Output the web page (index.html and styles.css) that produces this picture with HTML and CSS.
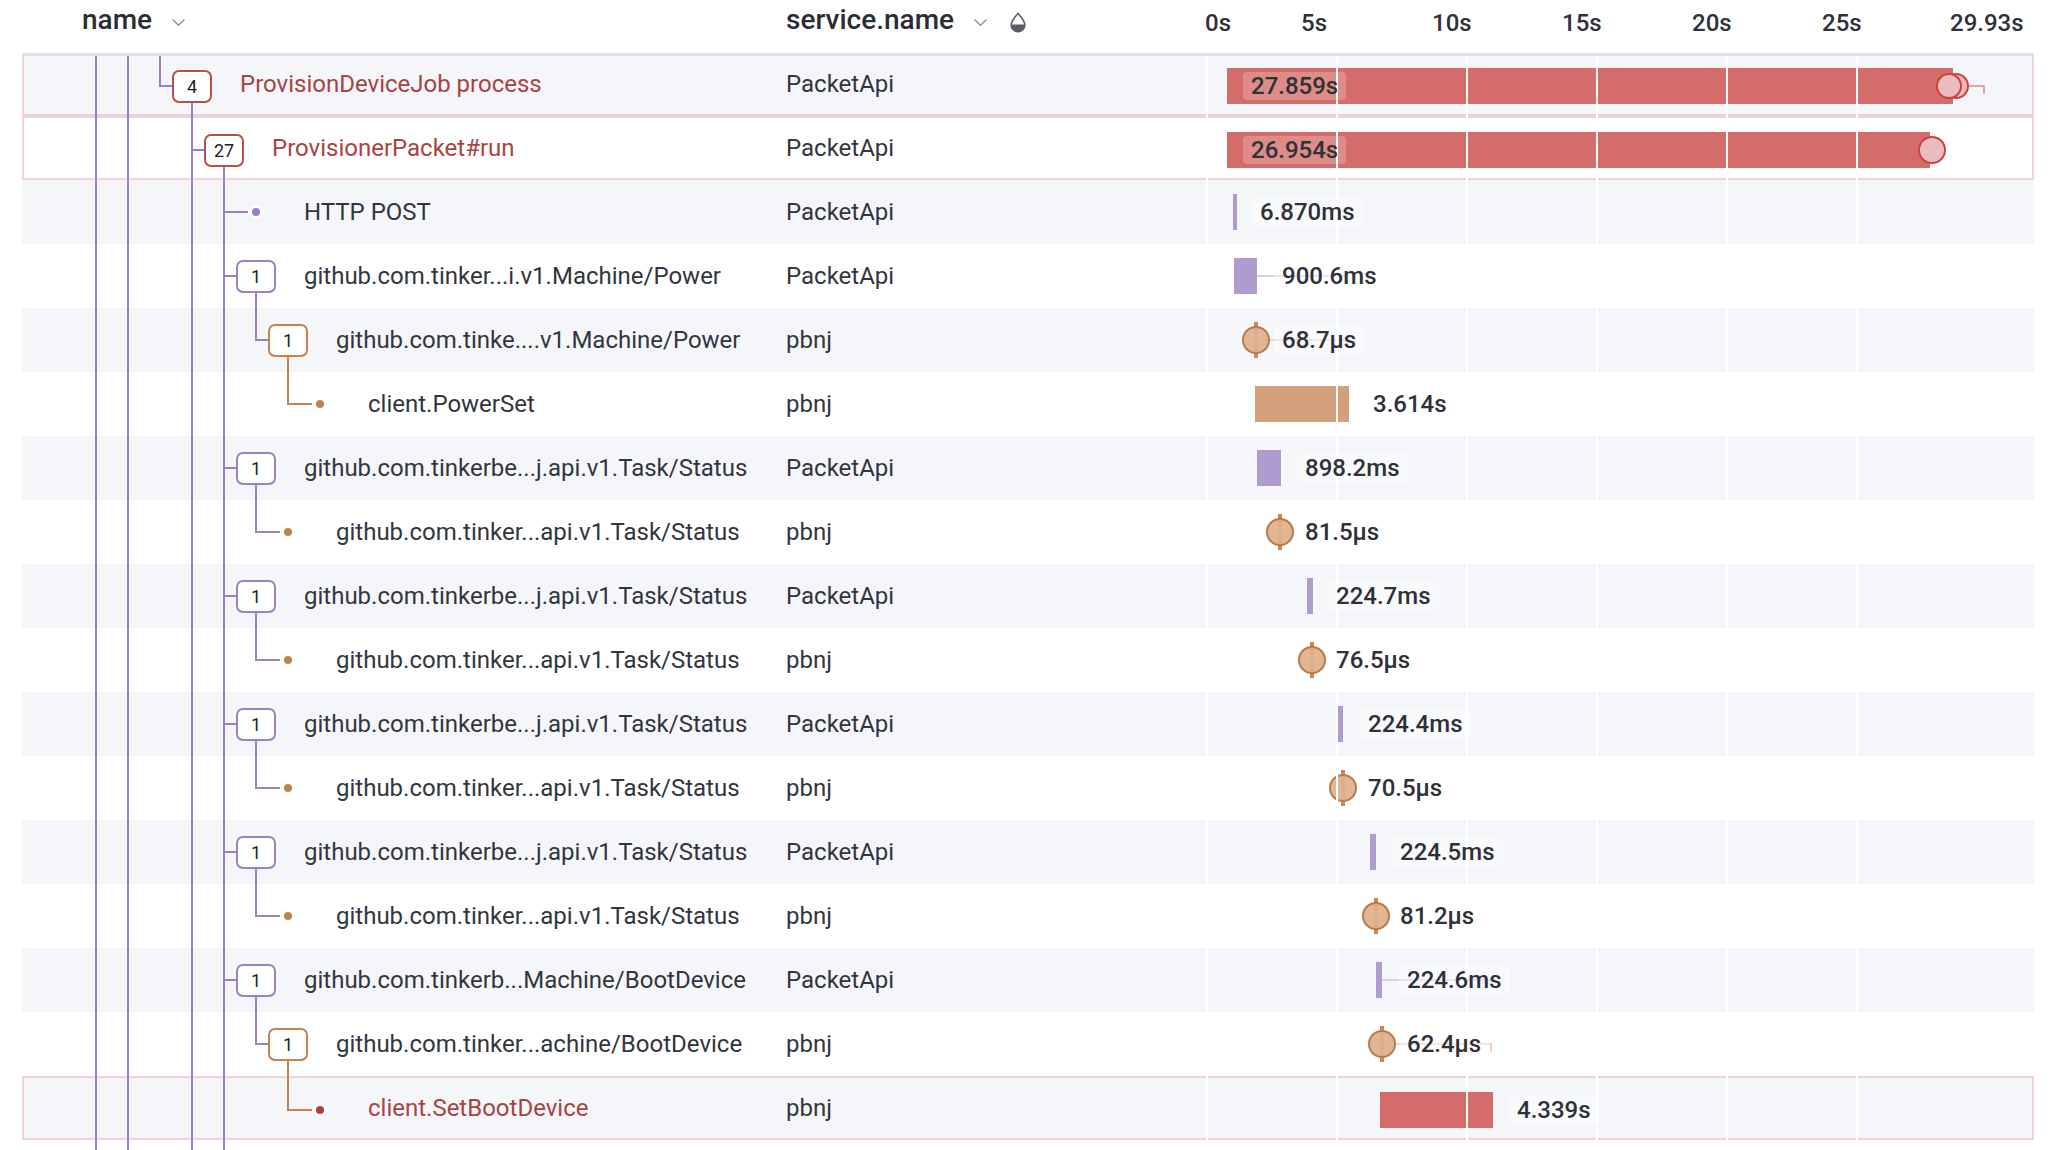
FILE: index.html
```html
<!DOCTYPE html>
<html lang="en">
<head>
<meta charset="utf-8">
<title>Trace</title>
<link rel="stylesheet" href="styles.css">
</head>
<body>
<div class="trace">
  <div class="head">
    <div class="hc hname"><span class="ht">name</span><svg class="chev" width="13" height="7" viewBox="0 0 13 7"><polyline points="0.5,0.5 6.5,6.3 12.5,0.5"/></svg></div>
    <div class="hc hsvc"><span class="ht">service.name</span><svg class="chev" width="13" height="7" viewBox="0 0 13 7"><polyline points="0.5,0.5 6.5,6.3 12.5,0.5"/></svg><svg class="drop" width="18" height="21" viewBox="0 0 18 21"><path class="dfill" d="M2.2 12.5 H15.8 A6.8 6.8 0 0 1 2.2 12.5 Z"/><path class="dline" d="M9 1.5 C9 1.5 2.2 8.6 2.2 13 A6.8 6.8 0 0 0 15.8 13 C15.8 8.6 9 1.5 9 1.5 Z"/></svg></div>
    <div class="axis">
      <span class="at" style="left:-1px">0s</span>
      <span class="at" style="left:95px">5s</span>
      <span class="at" style="left:226px">10s</span>
      <span class="at" style="left:356px">15s</span>
      <span class="at" style="left:486px">20s</span>
      <span class="at" style="left:616px">25s</span>
      <span class="at" style="left:744px">29.93s</span>
    </div>
  </div>

  <!-- 1 -->
  <div class="row odd err">
    <svg class="g" width="330" height="64" viewBox="0 0 330 64"><path class="p" d="M74 0V64M106 0V64M138 0V34H150M170 50V64"/></svg>
    <div class="cname"><span class="node d0 badge bred">4</span><span class="nm red">ProvisionDeviceJob process</span></div>
    <div class="csvc">PacketApi</div>
    <div class="ctl">
      <div class="bar red" style="left:21px;width:726px"></div>
      <div class="brk lred" style="left:760px;width:19px"></div>
      <div class="evt" style="left:750px"></div>
      <div class="evt" style="left:743px"></div>
      <span class="lbl onbar" style="left:37px">27.859s</span>
    </div>
  </div>
  <!-- 2 -->
  <div class="row err">
    <svg class="g" width="330" height="64" viewBox="0 0 330 64"><path class="p" d="M74 0V64M106 0V64M170 0V64M170 34H182M202 50V64"/></svg>
    <div class="cname"><span class="node d1 badge bred">27</span><span class="nm red">ProvisionerPacket#run</span></div>
    <div class="csvc">PacketApi</div>
    <div class="ctl">
      <div class="bar red" style="left:21px;width:703px"></div>
      <div class="evt big" style="left:726px"></div>
      <span class="lbl onbar" style="left:37px">26.954s</span>
    </div>
  </div>
  <!-- 3 -->
  <div class="row odd">
    <svg class="g" width="330" height="64" viewBox="0 0 330 64"><path class="p" d="M74 0V64M106 0V64M170 0V64M202 0V64M202 32H226"/></svg>
    <div class="cname"><span class="node d2 leaf"><i class="dot dp"></i></span><span class="nm">HTTP POST</span></div>
    <div class="csvc">PacketApi</div>
    <div class="ctl">
      <div class="bar purple" style="left:27px;width:4px"></div>
      <span class="lbl" style="left:46px">6.870ms</span>
    </div>
  </div>
  <!-- 4 -->
  <div class="row">
    <svg class="g" width="330" height="64" viewBox="0 0 330 64"><path class="p" d="M74 0V64M106 0V64M170 0V64M202 0V64M202 32H214M234 48V64"/></svg>
    <div class="cname"><span class="node d2 badge bp">1</span><span class="nm">github.com.tinker...i.v1.Machine/Power</span></div>
    <div class="csvc">PacketApi</div>
    <div class="ctl">
      <div class="bar purple" style="left:28px;width:23px"></div>
      <div class="brk lpurple" style="left:51px;width:91px"></div>
      <span class="lbl" style="left:68px">900.6ms</span>
    </div>
  </div>
  <!-- 5 -->
  <div class="row odd">
    <svg class="g" width="330" height="64" viewBox="0 0 330 64"><path class="p" d="M74 0V64M106 0V64M170 0V64M202 0V64M234 0V32H246"/><path class="o" d="M266 48V64"/></svg>
    <div class="cname"><span class="node d3 badge bo">1</span><span class="nm">github.com.tinke....v1.Machine/Power</span></div>
    <div class="csvc">pbnj</div>
    <div class="ctl">
      <div class="brk lorange" style="left:50px;width:92px"></div>
      <div class="tk" style="left:48px"></div>
      <div class="mark" style="left:50px"></div>
      <span class="lbl" style="left:68px">68.7µs</span>
    </div>
  </div>
  <!-- 6 -->
  <div class="row">
    <svg class="g" width="330" height="64" viewBox="0 0 330 64"><path class="p" d="M74 0V64M106 0V64M170 0V64M202 0V64"/><path class="o" d="M266 0V32H290"/></svg>
    <div class="cname"><span class="node d4 leaf"><i class="dot do"></i></span><span class="nm">client.PowerSet</span></div>
    <div class="csvc">pbnj</div>
    <div class="ctl">
      <div class="bar orange" style="left:49px;width:94px"></div>
      <span class="lbl" style="left:159px">3.614s</span>
    </div>
  </div>
  <!-- 7 -->
  <div class="row odd">
    <svg class="g" width="330" height="64" viewBox="0 0 330 64"><path class="p" d="M74 0V64M106 0V64M170 0V64M202 0V64M202 32H214M234 48V64"/></svg>
    <div class="cname"><span class="node d2 badge bp">1</span><span class="nm">github.com.tinkerbe...j.api.v1.Task/Status</span></div>
    <div class="csvc">PacketApi</div>
    <div class="ctl">
      <div class="bar purple" style="left:51px;width:24px"></div>
      <span class="lbl" style="left:91px">898.2ms</span>
    </div>
  </div>
  <!-- 8 -->
  <div class="row">
    <svg class="g" width="330" height="64" viewBox="0 0 330 64"><path class="p" d="M74 0V64M106 0V64M170 0V64M202 0V64M234 0V32H258"/></svg>
    <div class="cname"><span class="node d3 leaf"><i class="dot do"></i></span><span class="nm">github.com.tinker...api.v1.Task/Status</span></div>
    <div class="csvc">pbnj</div>
    <div class="ctl">
      <div class="tk" style="left:72px"></div>
      <div class="mark" style="left:74px"></div>
      <span class="lbl" style="left:91px">81.5µs</span>
    </div>
  </div>
  <!-- 9 -->
  <div class="row odd">
    <svg class="g" width="330" height="64" viewBox="0 0 330 64"><path class="p" d="M74 0V64M106 0V64M170 0V64M202 0V64M202 32H214M234 48V64"/></svg>
    <div class="cname"><span class="node d2 badge bp">1</span><span class="nm">github.com.tinkerbe...j.api.v1.Task/Status</span></div>
    <div class="csvc">PacketApi</div>
    <div class="ctl">
      <div class="bar purple" style="left:101px;width:6px"></div>
      <span class="lbl" style="left:122px">224.7ms</span>
    </div>
  </div>
  <!-- 10 -->
  <div class="row">
    <svg class="g" width="330" height="64" viewBox="0 0 330 64"><path class="p" d="M74 0V64M106 0V64M170 0V64M202 0V64M234 0V32H258"/></svg>
    <div class="cname"><span class="node d3 leaf"><i class="dot do"></i></span><span class="nm">github.com.tinker...api.v1.Task/Status</span></div>
    <div class="csvc">pbnj</div>
    <div class="ctl">
      <div class="tk" style="left:104px"></div>
      <div class="mark" style="left:106px"></div>
      <span class="lbl" style="left:122px">76.5µs</span>
    </div>
  </div>
  <!-- 11 -->
  <div class="row odd">
    <svg class="g" width="330" height="64" viewBox="0 0 330 64"><path class="p" d="M74 0V64M106 0V64M170 0V64M202 0V64M202 32H214M234 48V64"/></svg>
    <div class="cname"><span class="node d2 badge bp">1</span><span class="nm">github.com.tinkerbe...j.api.v1.Task/Status</span></div>
    <div class="csvc">PacketApi</div>
    <div class="ctl">
      <div class="bar purple" style="left:131px;width:6px"></div>
      <span class="lbl" style="left:154px">224.4ms</span>
    </div>
  </div>
  <!-- 12 -->
  <div class="row">
    <svg class="g" width="330" height="64" viewBox="0 0 330 64"><path class="p" d="M74 0V64M106 0V64M170 0V64M202 0V64M234 0V32H258"/></svg>
    <div class="cname"><span class="node d3 leaf"><i class="dot do"></i></span><span class="nm">github.com.tinker...api.v1.Task/Status</span></div>
    <div class="csvc">pbnj</div>
    <div class="ctl">
      <div class="tk" style="left:135px"></div>
      <div class="mark" style="left:137px"></div>
      <span class="lbl" style="left:154px">70.5µs</span>
    </div>
  </div>
  <!-- 13 -->
  <div class="row odd">
    <svg class="g" width="330" height="64" viewBox="0 0 330 64"><path class="p" d="M74 0V64M106 0V64M170 0V64M202 0V64M202 32H214M234 48V64"/></svg>
    <div class="cname"><span class="node d2 badge bp">1</span><span class="nm">github.com.tinkerbe...j.api.v1.Task/Status</span></div>
    <div class="csvc">PacketApi</div>
    <div class="ctl">
      <div class="bar purple" style="left:164px;width:6px"></div>
      <span class="lbl" style="left:186px">224.5ms</span>
    </div>
  </div>
  <!-- 14 -->
  <div class="row">
    <svg class="g" width="330" height="64" viewBox="0 0 330 64"><path class="p" d="M74 0V64M106 0V64M170 0V64M202 0V64M234 0V32H258"/></svg>
    <div class="cname"><span class="node d3 leaf"><i class="dot do"></i></span><span class="nm">github.com.tinker...api.v1.Task/Status</span></div>
    <div class="csvc">pbnj</div>
    <div class="ctl">
      <div class="tk" style="left:168px"></div>
      <div class="mark" style="left:170px"></div>
      <span class="lbl" style="left:186px">81.2µs</span>
    </div>
  </div>
  <!-- 15 -->
  <div class="row odd">
    <svg class="g" width="330" height="64" viewBox="0 0 330 64"><path class="p" d="M74 0V64M106 0V64M170 0V64M202 0V64M202 32H214M234 48V64"/></svg>
    <div class="cname"><span class="node d2 badge bp">1</span><span class="nm">github.com.tinkerb...Machine/BootDevice</span></div>
    <div class="csvc">PacketApi</div>
    <div class="ctl">
      <div class="bar purple" style="left:170px;width:6px"></div>
      <div class="brk lpurple" style="left:176px;width:110px"></div>
      <span class="lbl" style="left:193px">224.6ms</span>
    </div>
  </div>
  <!-- 16 -->
  <div class="row">
    <svg class="g" width="330" height="64" viewBox="0 0 330 64"><path class="p" d="M74 0V64M106 0V64M170 0V64M202 0V64M234 0V32H246"/><path class="o" d="M266 48V64"/></svg>
    <div class="cname"><span class="node d3 badge bo">1</span><span class="nm">github.com.tinker...achine/BootDevice</span></div>
    <div class="csvc">pbnj</div>
    <div class="ctl">
      <div class="brk lorange" style="left:176px;width:110px"></div>
      <div class="tk" style="left:174px"></div>
      <div class="mark" style="left:176px"></div>
      <span class="lbl" style="left:193px">62.4µs</span>
    </div>
  </div>
  <!-- 17 -->
  <div class="row odd err">
    <svg class="g" width="330" height="64" viewBox="0 0 330 64"><path class="p" d="M74 0V64M106 0V64M170 0V64M202 0V64"/><path class="o" d="M266 0V34H290"/></svg>
    <div class="cname"><span class="node d4 leaf"><i class="dot dr"></i></span><span class="nm red">client.SetBootDevice</span></div>
    <div class="csvc">pbnj</div>
    <div class="ctl">
      <div class="bar red" style="left:174px;width:113px"></div>
      <span class="lbl" style="left:303px">4.339s</span>
    </div>
  </div>
  <!-- 18 (partially visible) -->
  <div class="row">
    <svg class="g" width="330" height="64" viewBox="0 0 330 64"><path class="p" d="M74 0V64M106 0V64M170 0V64M202 0V64"/></svg>
    <div class="cname"></div>
    <div class="csvc"></div>
    <div class="ctl"></div>
  </div>
</div>
</body>
</html>
```

FILE: styles.css
```css
html, body {
  margin: 0;
  padding: 0;
  background: #ffffff;
  overflow: hidden;
  height: 1150px;
}

body {
  font-family: Roboto, "Liberation Sans", sans-serif;
  color: #33353e;
}

.trace {
  width: 2012px;
  margin-left: 22px;
}

/* header */
.head {
  display: grid;
  grid-template-columns: 764px 420px 1fr;
  height: 53px;
  border-bottom: 3px solid #dde0ea;
  background: #ffffff;
  position: relative;
  z-index: 5;
  margin-bottom: -4px;
}

.hc {
  display: flex;
  align-items: flex-start;
  padding-top: 4px;
}

.hname {
  padding-left: 60px;
}

.ht {
  font-size: 28px;
  line-height: 32px;
  font-weight: 500;
  color: #2b2d35;
}

.chev {
  margin-left: 20px;
  margin-top: 15px;
  fill: none;
  stroke: #8a8d98;
  stroke-width: 1.3;
}

.drop {
  margin-left: 22px;
  margin-top: 8px;
}

.drop .dline {
  fill: none;
  stroke: #5a5d68;
  stroke-width: 1.6;
}

.drop .dfill {
  fill: #5a5d68;
}

.axis {
  position: relative;
}

.at {
  position: absolute;
  top: 7px;
  font-size: 24px;
  line-height: 32px;
  font-weight: 500;
  color: #2f3139;
  white-space: nowrap;
}

/* rows */
.row {
  position: relative;
  display: grid;
  grid-template-columns: 764px 420px 1fr;
  height: 64px;
  box-sizing: border-box;
  background: #ffffff;
}

.row.odd {
  background: #f5f6fa;
}

.row.err {
  box-shadow: inset 0 0 0 2px #f0d3d7;
}

.g {
  position: absolute;
  left: 0;
  top: 0;
}

.g path {
  fill: none;
  stroke-width: 2;
}

.g .p {
  stroke: #9c7fc8;
}

.g .o {
  stroke: #c5824c;
}

.cname {
  display: flex;
  align-items: center;
  height: 64px;
}

.node {
  position: relative;
  z-index: 1;
  flex: 0 0 40px;
  width: 40px;
  height: 33px;
  box-sizing: border-box;
  display: flex;
  align-items: center;
  justify-content: center;
}

.d0 { margin-left: 150px; }
.d1 { margin-left: 182px; }
.d2 { margin-left: 214px; }
.d3 { margin-left: 246px; }
.d4 { margin-left: 278px; }

.badge {
  border: 2px solid #9c7fc8;
  border-radius: 7px;
  background: #ffffff;
  font-size: 18px;
  color: #1f2026;
}

.badge.bp { border-color: #9c7fc8; }
.badge.bo { border-color: #c5824c; }
.badge.bred { border-color: #b5504b; }

.err .badge,
.err .dot {
  margin-top: 4px;
}

.dot {
  width: 8px;
  height: 8px;
  border-radius: 50%;
  box-shadow: 0 0 0 3px #ffffff;
}

.dot.dp { background: #9c7fc8; }
.dot.do { background: #c5824c; }
.dot.dr { background: #b0413e; }

.nm {
  margin-left: 28px;
  font-size: 24px;
  line-height: 64px;
  color: #33353e;
  white-space: nowrap;
}

.nm.red {
  color: #a9433f;
}

.csvc {
  font-size: 24px;
  line-height: 64px;
  color: #33353e;
}

/* timeline */
.ctl {
  position: relative;
  height: 64px;
}

.ctl::after {
  content: "";
  position: absolute;
  left: 0;
  top: 0;
  bottom: 0;
  width: 780px;
  background: repeating-linear-gradient(90deg, #ffffff 0 2px, transparent 2px 130px);
  z-index: 2;
  pointer-events: none;
}

.bar {
  position: absolute;
  top: 14px;
  height: 36px;
  z-index: 1;
}

.err .bar {
  top: 16px;
}

.bar.red { background: #d46c69; }
.bar.purple { background: #b09bd1; }
.bar.orange { background: #d4a07b; }

.tk {
  position: absolute;
  top: 14px;
  width: 4px;
  height: 36px;
  background: #c88a58;
  z-index: 1;
}

.mark {
  position: absolute;
  top: 18px;
  width: 28px;
  height: 28px;
  margin-left: -14px;
  box-sizing: border-box;
  border-radius: 50%;
  border: 2.5px solid #bd7b48;
  background: rgba(222, 176, 142, 0.93);
  z-index: 1;
}

.evt {
  position: absolute;
  top: 21px;
  width: 26px;
  height: 26px;
  margin-left: -13px;
  box-sizing: border-box;
  border-radius: 50%;
  border: 2px solid #c9443f;
  background: #e9bdbd;
  z-index: 3;
}

.evt.big {
  top: 20px;
  width: 28px;
  height: 28px;
  margin-left: -14px;
}

.brk {
  position: absolute;
  top: 31px;
  height: 2px;
  z-index: 1;
}

.err .brk {
  top: 33px;
}

.brk::after {
  content: "";
  position: absolute;
  right: 0;
  top: 0;
  width: 2px;
  height: 9px;
  background: inherit;
}

.brk.lpurple { background: #d9cfea; }
.brk.lorange { background: #edd3c0; }
.brk.lred { background: #e6a4a3; }

.lbl {
  position: absolute;
  top: 18px;
  height: 28px;
  line-height: 28px;
  padding: 0 8px;
  border-radius: 4px;
  font-size: 24px;
  font-weight: 500;
  color: #2f3139;
  background: rgba(255, 255, 255, 0.45);
  white-space: nowrap;
  z-index: 3;
}

.err .lbl {
  top: 20px;
}

.lbl.onbar {
  background: rgba(255, 255, 255, 0.22);
}
```
